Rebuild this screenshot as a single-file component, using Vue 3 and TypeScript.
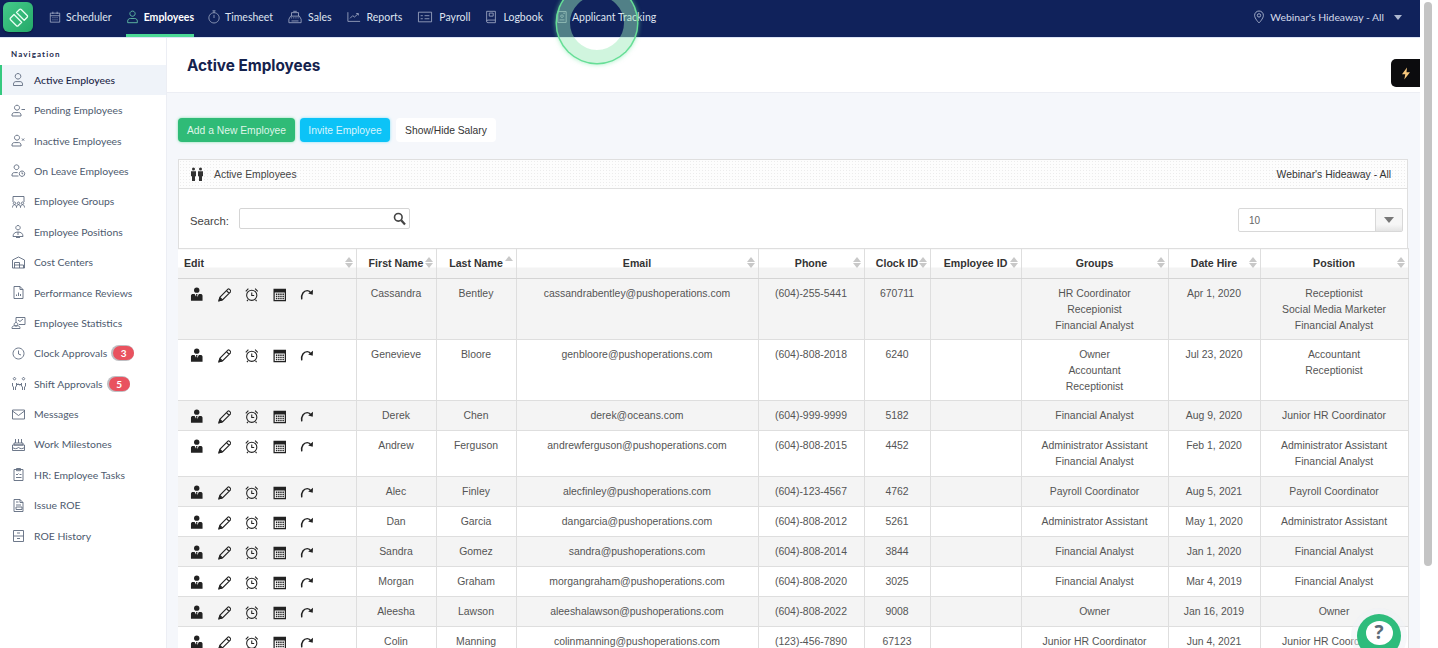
<script setup lang="ts">
const topIcons: Record<string, { d: string; w: number; vb: string }> = {
  scheduler: { w: 12, vb: '0 0 14 16', d: 'M1.500 3.500h11v10.500h-11zM1.500 6.500h11M4.500 1.800v2.700M9.500 1.800v2.700M4 8.800h1.200M6.400 8.800h1.200M8.800 8.800h1.200M4 11.300h1.200M6.400 11.300h1.200M8.800 11.300h1.200' },
  employees: { w: 13, vb: '0 0 14 16', d: 'M7 1.200a3 3 0 1 0 .01 0zM1.500 14.500v-1.800c0-1.800 1.300-3 3-3h5c1.700 0 3 1.200 3 3v1.800z' },
  timesheet: { w: 12, vb: '0 0 14 16', d: 'M7 3a6 6 0 1 0 .01 0zM7 .8V3M5.200.8h3.600M7 5.500v3.700' },
  sales: { w: 16, vb: '0 0 16 16', d: 'M3 7h10l2 3.500V14.500H1v-4zM4 7V3h8v4M6 1.500h4M3.500 9h1.200M6 9h1.200M8.500 9h1.200M11 9h1.200M4 12.500h8' },
  reports: { w: 16, vb: '0 0 16 16', d: 'M1 2.500v10.500h14M3.500 9.500l3-3 2 1.500 4-3.500M10.500 4h2.500v2.200' },
  payroll: { w: 18, vb: '0 0 17 16', d: 'M1 2.500h15v11H1zM3.500 6.500h2.500M3.500 10h2.500M8 6.500h5.500M8 10h5.500' },
  logbook: { w: 14, vb: '0 0 13 16', d: 'M1.500 1.500h10v13h-8.500A1.500 1.500 0 0 1 1.500 13zM1.500 13A1.500 1.500 0 0 1 3 11.500h8.500M4.500 3.500h4.500v3.500H4.500z' },
  applicant: { w: 10, vb: '0 0 12 16', d: 'M1 1.500h10v13H1zM6 5.500a1.500 1.500 0 1 0 .01 0zM3 11.500h6M7.500 3.500h2' },
};
const topItems = [
  { key: 'scheduler', label: 'Scheduler' },
  { key: 'employees', label: 'Employees', active: true },
  { key: 'timesheet', label: 'Timesheet' },
  { key: 'sales', label: 'Sales' },
  { key: 'reports', label: 'Reports' },
  { key: 'payroll', label: 'Payroll' },
  { key: 'logbook', label: 'Logbook' },
  { key: 'applicant', label: 'Applicant Tracking' },
];
const sideItems: { label: string; d: string; active?: boolean; badge?: string }[] = [
  { label: 'Active Employees', active: true, d: 'M7 1.500a2.800 2.800 0 1 0 .01 0zM2.500 13.500v-1.400c0-1.500 1-2.500 2.300-2.500h4.400c1.300 0 2.300 1 2.300 2.500v1.400z' },
  { label: 'Pending Employees', d: 'M6 2.200a2.500 2.500 0 1 0 .01 0zM1 13v-1c0-1.500 1-2.400 2.300-2.400h4.400c1.300 0 2.300.9 2.300 2.400v1zM10.500 6.500H14' },
  { label: 'Inactive Employees', d: 'M6 2.200a2.500 2.500 0 1 0 .01 0zM1 13v-1c0-1.500 1-2.400 2.300-2.400h4.400c1.300 0 2.300.9 2.300 2.400v1zM11 5.500l2.200 2.200M13.200 5.500L11 7.700' },
  { label: 'On Leave Employees', d: 'M5.500 1.800a2.400 2.400 0 1 0 .01 0zM1 13v-1c0-1.500 1-2.400 2.300-2.400h3.400M11 8a2.700 2.700 0 1 0 .01 0zM11 9.300v1.500h1.200M1 13h6.500' },
  { label: 'Employee Groups', d: 'M2 8V2.500h11V8M3.500 8a1.200 1.200 0 1 0 .01 0zM7.500 8a1.200 1.200 0 1 0 .01 0zM11.500 8a1.200 1.200 0 1 0 .01 0zM1.500 13.500c0-2 1-2.800 2-2.800s2 .8 2 2.800M5.500 13.500c0-2 1-2.800 2-2.800s2 .8 2 2.800M9.500 13.500c0-2 1-2.800 2-2.800s2 .8 2 2.800' },
  { label: 'Employee Positions', d: 'M7 1.500a2.200 2.200 0 1 0 .01 0zM2 12.500c0-3 2-4.500 5-4.500s5 1.500 5 4.500zM7 8v3M5 13.500h4' },
  { label: 'Cost Centers', d: 'M1.500 13V5L7.500 2l6 3v8zM3.500 13V7.500h5V13M8.500 10h4v3M3.500 10h5' },
  { label: 'Performance Reviews', d: 'M3 1.500h6l3 3v9H3zM9 1.500v3h3M5.500 11V9.500M7.500 11V7.500M9.500 11V9' },
  { label: 'Employee Statistics', d: 'M5 7V2.500h9v7H8M7 5l2 1.500L12 4M5 7.500a1.800 1.800 0 1 0 .01 0zM1 13.500v-.7c0-1 1-2 2.200-2h3.600c1.200 0 2.200 1 2.200 2v.7z' },
  { label: 'Clock Approvals', badge: '3', d: 'M7.500 2a5.500 5.500 0 1 0 .01 0zM7.500 4.500v3.500l2.500 1' },
  { label: 'Shift Approvals', badge: '5', d: 'M3.500 1.500a1.200 1.200 0 1 0 .01 0zM12.500 1.500a1.200 1.200 0 1 0 .01 0zM1.500 7v3l1 1v3M5.500 7v3l-1 1v3M10.500 7v3l1 1v3M14.500 7v3l-1 1v3M6 8.500h4M6.200 8.500l1.200-1M9.800 8.500l-1.200 1' },
  { label: 'Messages', d: 'M1.500 3h12v9h-12zM1.500 4l6 4.500 6-4.500' },
  { label: 'Work Milestones', d: 'M1.500 8h12v5.500h-12zM1.500 10.500c2 1.500 4 1.500 6 0 2 1.500 4 1.500 6 0M3 6h9v2H3zM4.500 2v4M7.500 2v4M10.500 2v4' },
  { label: 'HR: Employee Tasks', d: 'M3 2.500h9v11H3zM5.500 1.500h4v2.200h-4zM5 7l1 1 1.500-1.500M8.500 7.500H10.500M5 10.500h5.500' },
  { label: 'Issue ROE', d: 'M3 1.500h6l3 3v9H3zM9 1.500v3h3M5 4h2.500M5 7h5M5 9h6v2.500H5z' },
  { label: 'ROE History', d: 'M2.500 2.500h10v11h-10zM2.500 8h10M6 5h3M6 10.500h3' },
];
const columns = [
  { label: 'Edit', cls: 'c-edit' },
  { label: 'First Name', cls: 'c-first' },
  { label: 'Last Name', cls: 'c-last', sorted: true },
  { label: 'Email', cls: 'c-email' },
  { label: 'Phone', cls: 'c-phone' },
  { label: 'Clock ID', cls: 'c-clock' },
  { label: 'Employee ID', cls: 'c-emp' },
  { label: 'Groups', cls: 'c-groups' },
  { label: 'Date Hire', cls: 'c-date' },
  { label: 'Position', cls: 'c-pos' },
];
const rows = [
  { first: 'Cassandra', last: 'Bentley', email: 'cassandrabentley@pushoperations.com', phone: '(604)-255-5441', clock: '670711', groups: ['HR Coordinator', 'Recepionist', 'Financial Analyst'], date: 'Apr 1, 2020', pos: ['Receptionist', 'Social Media Marketer', 'Financial Analyst'] },
  { first: 'Genevieve', last: 'Bloore', email: 'genbloore@pushoperations.com', phone: '(604)-808-2018', clock: '6240', groups: ['Owner', 'Accountant', 'Receptionist'], date: 'Jul 23, 2020', pos: ['Accountant', 'Receptionist'] },
  { first: 'Derek', last: 'Chen', email: 'derek@oceans.com', phone: '(604)-999-9999', clock: '5182', groups: ['Financial Analyst'], date: 'Aug 9, 2020', pos: ['Junior HR Coordinator'] },
  { first: 'Andrew', last: 'Ferguson', email: 'andrewferguson@pushoperations.com', phone: '(604)-808-2015', clock: '4452', groups: ['Administrator Assistant', 'Financial Analyst'], date: 'Feb 1, 2020', pos: ['Administrator Assistant', 'Financial Analyst'] },
  { first: 'Alec', last: 'Finley', email: 'alecfinley@pushoperations.com', phone: '(604)-123-4567', clock: '4762', groups: ['Payroll Coordinator'], date: 'Aug 5, 2021', pos: ['Payroll Coordinator'] },
  { first: 'Dan', last: 'Garcia', email: 'dangarcia@pushoperations.com', phone: '(604)-808-2012', clock: '5261', groups: ['Administrator Assistant'], date: 'May 1, 2020', pos: ['Administrator Assistant'] },
  { first: 'Sandra', last: 'Gomez', email: 'sandra@pushoperations.com', phone: '(604)-808-2014', clock: '3844', groups: ['Financial Analyst'], date: 'Jan 1, 2020', pos: ['Financial Analyst'] },
  { first: 'Morgan', last: 'Graham', email: 'morgangraham@pushoperations.com', phone: '(604)-808-2020', clock: '3025', groups: ['Financial Analyst'], date: 'Mar 4, 2019', pos: ['Financial Analyst'] },
  { first: 'Aleesha', last: 'Lawson', email: 'aleeshalawson@pushoperations.com', phone: '(604)-808-2022', clock: '9008', groups: ['Owner'], date: 'Jan 16, 2019', pos: ['Owner'] },
  { first: 'Colin', last: 'Manning', email: 'colinmanning@pushoperations.com', phone: '(123)-456-7890', clock: '67123', groups: ['Junior HR Coordinator'], date: 'Jun 4, 2021', pos: ['Junior HR Coordinator'] },
];
</script>

<template>
  <div class="page">
    <div class="app">
      <header class="topbar">
        <div class="logo">
          <svg width="30" height="30" viewBox="0 0 30 30" fill="none" stroke="#eafff3" stroke-width="1.300" stroke-linejoin="round">
            <path d="M17.500 7.500a1.200 1.200 0 0 1 1.700 0l6 6a1.200 1.200 0 0 1 0 1.700l-3 3L14.500 10.500z" transform="translate(-1 0)" />
            <path d="M14.500 10.500l7.700 7.700-3.500 3.500a1.200 1.200 0 0 1-1.700 0l-6-6a1.200 1.200 0 0 1 0-1.700z" transform="translate(-3.500 2)" />
          </svg>
        </div>
        <nav class="topnav">
          <a v-for="t in topItems" :key="t.key" class="topitem" :class="{ on: t.active }">
            <svg class="ticon" :width="topIcons[t.key].w" height="14" :viewBox="topIcons[t.key].vb" fill="none" stroke-width="0.9"><path :d="topIcons[t.key].d" /></svg>
            <span>{{ t.label }}</span>
          </a>
        </nav>
        <div class="location">
          <svg width="12" height="14" viewBox="0 0 12 14" fill="none" stroke="#aeb8d0" stroke-width="0.9"><path d="M6 1a4.400 4.400 0 0 0-4.400 4.400C1.600 8.500 6 13 6 13s4.400-4.500 4.400-7.600A4.400 4.400 0 0 0 6 1z" /><circle cx="6" cy="5.400" r="1.700" /></svg>
          <span>Webinar's Hideaway - All</span>
          <i class="caret"></i>
        </div>
      </header>

      <div class="body">
        <aside class="sidebar">
          <div class="navhead">Navigation</div>
          <a v-for="s in sideItems" :key="s.label" class="sideitem" :class="{ on: s.active }">
            <svg class="sicon" viewBox="0 0 15 15" fill="none" stroke="#5d6a7e" stroke-width="0.9"><path :d="s.d" /></svg>
            <span>{{ s.label }}</span>
            <b v-if="s.badge" class="badge">{{ s.badge }}</b>
          </a>
        </aside>

        <main class="main">
          <div class="titlebar"><h1>Active Employees</h1></div>
          <div class="content">
            <div class="buttons">
              <button class="btn green">Add a New Employee</button>
              <button class="btn cyan">Invite Employee</button>
              <button class="btn plain">Show/Hide Salary</button>
            </div>
            <section class="panel">
              <div class="panelhead">
                <svg width="14" height="14" viewBox="0 0 14 14" fill="#333"><circle cx="3.500" cy="2" r="1.500" /><circle cx="10.500" cy="2" r="1.500" /><path d="M1 4.200h5v5H5v4.800H2V9.200H1zM8 4.200h5v5h-1v4.800H9V9.200H8z" /></svg>
                <span class="ptitle">Active Employees</span>
                <span class="pright">Webinar's Hideaway - All</span>
              </div>
              <div class="controls">
                <label class="search">
                  <span>Search:</span>
                  <span class="searchbox">
                    <svg width="13" height="14" viewBox="0 0 13 14" fill="none" stroke="#444"><circle cx="5.300" cy="5.300" r="3.800" stroke-width="1.600" /><path d="M8.200 8.200l3.800 4.300" stroke-width="2.200" /></svg>
                  </span>
                </label>
                <div class="select">
                  <span class="selval">10</span>
                  <span class="selbtn"><i></i></span>
                </div>
              </div>
              <table class="grid">
                <thead>
                  <tr>
                    <th v-for="c in columns" :key="c.label" :class="c.cls">
                      {{ c.label }}
                      <span class="sort" :class="{ sorted: c.sorted }"><i class="up"></i><i class="down"></i></span>
                    </th>
                  </tr>
                </thead>
                <tbody>
                  <tr v-for="r in rows" :key="r.email" :class="{ tall: r.groups.length === 3 }">
                    <td class="edit">
                      <div class="actions">
                        <svg viewBox="0 0 14 15" fill="#222"><circle cx="7" cy="3" r="2.800" /><path d="M1 14V8.800C1 7.600 2 7 3 7h1.800L7 11 9.200 7H11c1 0 2 .6 2 1.800V14z" /><path d="M6.200 7h1.600L7.500 8.200 8 11 7 12.500 6 11l.5-2.800z" /></svg>
                        <svg viewBox="0 0 14 15" fill="none" stroke="#222" stroke-width="1.150"><path d="M1 14l.9-3.600L10.300 2a1 1 0 0 1 1.400 0l1.300 1.300a1 1 0 0 1 0 1.400L4.600 13.100zM1.900 10.400l2.700 2.700M8.800 3.500l2.700 2.700" /><path d="M1 14l.6-2.300 1.700 1.700z" fill="#222" /></svg>
                        <svg viewBox="0 0 14 15" fill="none" stroke="#222" stroke-width="1.100"><circle cx="7" cy="8.300" r="5.300" /><path d="M7 5.300v3.200h2.500M.8 4.200L3.500 1.500M13.200 4.200L10.500 1.500M3 13l-1 1.300M11 13l1 1.300" /></svg>
                        <svg viewBox="0 0 14 15" fill="#222"><path d="M.5 1.500h13V14.500H.5zM1.800 5.500v7.800h10.400V5.500z" /><path d="M3 6.500h1.500v1.500H3zM5.300 6.500h1.500v1.500H5.300zM7.500 6.500H9v1.500H7.500zM9.800 6.500h1.500v1.500H9.800zM3 8.800h1.500v1.500H3zM5.300 8.800h1.500v1.500H5.300zM7.500 8.800H9v1.500H7.500zM9.800 8.800h1.500v1.500H9.800zM3 11h1.500v1.500H3zM5.300 11h1.500v1.500H5.300zM7.500 11H9v1.500H7.500zM9.800 11h1.500v1.500H9.800z" /></svg>
                        <svg viewBox="0 0 14 15" fill="none" stroke="#222" stroke-width="1.500"><path d="M1.800 12.500C1 7 4 3.500 7.500 3.500c1.700 0 3 .8 3.700 2.200" /><path d="M13.500 2.500l-.3 5.200-4.700-1.200z" fill="#222" stroke="none" /></svg>
                      </div>
                    </td>
                    <td>{{ r.first }}</td>
                    <td>{{ r.last }}</td>
                    <td>{{ r.email }}</td>
                    <td>{{ r.phone }}</td>
                    <td>{{ r.clock }}</td>
                    <td></td>
                    <td><div v-for="g in r.groups" :key="g">{{ g }}</div></td>
                    <td>{{ r.date }}</td>
                    <td><div v-for="p in r.pos" :key="p">{{ p }}</div></td>
                  </tr>
                </tbody>
              </table>
            </section>
          </div>
        </main>
      </div>
    </div>

    <div class="scrollbar"><div class="thumb"></div></div>

    <div class="ring"></div>
    <div class="bolt">
      <svg width="10" height="13" viewBox="0 0 10 13"><path d="M6 .5L1 7.300h3.300L3.300 12.500 9 5.300H5.500z" fill="#f7c77c" /></svg>
    </div>
    <div class="help">
      <div class="bubble">?</div>
    </div>
  </div>
</template>

<style>
html, body { margin: 0; padding: 0; overflow: hidden; background: #fff; }
</style>

<style scoped>
.page { position: relative; display: flex; width: 1438px; height: 648px; overflow: hidden; background: #fff; font-family: "Liberation Sans", Arial, sans-serif; }
.app { width: 1420px; flex: none; display: flex; flex-direction: column; overflow: hidden; }
.scrollbar { flex: 1; padding: 2px 6px 0 4px; background: #fff; }
.thumb { height: 564px; border-radius: 4px; background: #c4c4c4; }

.topbar { flex: none; height: 37px; display: flex; align-items: flex-start; background: #10225b; box-shadow: 0 1px 0 #dde4f6; position: relative; z-index: 1; }
.logo { width: 30px; height: 30px; margin: 2px 0 0 3px; border-radius: 6px; background: linear-gradient(135deg, #45c98a, #23a968); box-shadow: 0 1px 2px rgba(0,0,0,.4); }
.logo svg { display: block; }
.topnav { display: flex; height: 37px; margin-left: 16px; gap: 14px; }
.topitem { display: flex; align-items: center; gap: 5px; height: 37px; box-sizing: border-box; border-bottom: 3px solid transparent; color: #dfe4f0; font: 400 10.500px "Lato", sans-serif; stroke: #a9b3cb; }
.topitem.on { color: #fff; font-weight: 700; border-bottom-color: #4bd895; stroke: #6fd8b0; }
.ticon { flex: none; }
.location { height: 34px; margin-left: auto; margin-right: 18px; display: flex; align-items: center; gap: 5px; color: #d6dcec; font: 400 10.400px "Lato", sans-serif; }
.caret { margin-left: 5px; width: 0; height: 0; border: 4px solid transparent; border-top: 5px solid #aeb8d0; border-bottom: 0; }

.body { flex: 1; display: flex; min-height: 0; }
.sidebar { flex: none; width: 166px; background: #fff; border-right: 1px solid #eceef4; padding-top: 12px; }
.navhead { height: 15.600px; padding-left: 11px; color: #1e2b4d; font: 700 8px/10px "Lato", sans-serif; letter-spacing: 1.100px; }
.sideitem { position: relative; display: flex; align-items: center; height: 30.400px; padding-left: 11px; color: #4d5a6e; font: 400 10.400px "Lato", sans-serif; }
.sideitem.on { background: #eff3f9; color: #1c2748; font-weight: 500; box-shadow: inset 2px 0 0 #35c97f; }
.sicon { width: 15px; height: 15px; flex: none; margin-right: 8px; }
.badge { margin-left: 6px; min-width: 21px; height: 14px; padding: 0 1px; box-sizing: border-box; border-radius: 7px; background: #e9525f; color: #fff; font: 700 10px/14px "Lato", sans-serif; text-align: center; box-shadow: -1px 0 0 1px rgba(70,70,80,.35); }

.main { flex: 1; min-width: 0; display: flex; flex-direction: column; background: #f5f7fb; }
.titlebar { flex: none; height: 56px; box-sizing: border-box; background: #fff; border-bottom: 1px solid #eceef4; padding: 20px 0 0 20px; }
h1 { margin: 0; color: #15224d; font: 700 15.300px/18px "Inter", sans-serif; }
.content { padding: 25px 12px 0 11px; }
.buttons { display: flex; gap: 5px; height: 24px; }
.btn { height: 24px; padding: 0; border: 0; border-radius: 4px; font: 400 10.300px "Liberation Sans", sans-serif; }
.green { width: 117px; background: #2fbb77; color: #dff5e8; box-shadow: 0 0 3px #7fe0ac; }
.cyan { width: 90px; background: #0cc3f7; color: #d8f4fd; box-shadow: 0 0 3px #7fdff9; }
.plain { width: 100px; margin-left: 1px; background: #fff; color: #333; }

.panel { margin-top: 17px; background: #fff; border: 1px solid #dfdfdf; border-bottom: 0; width: 1228px; }
.panelhead { height: 28px; display: flex; align-items: center; padding: 0 16px 0 11px; border-bottom: 1px solid #dfdfdf; color: #444; font-size: 10.400px; background-color: #fdfdfd; background-image: radial-gradient(#ececec 0.7px, transparent 0.8px); background-size: 3px 3px; }
.ptitle { margin-left: 10px; }
.pright { margin-left: auto; color: #333; }
.controls { height: 59px; display: flex; justify-content: space-between; padding: 19px 4px 0 11px; box-sizing: border-box; }
.search { display: flex; gap: 10px; height: 21px; color: #444; font-size: 11.300px; align-items: flex-start; }
.search > span:first-child { line-height: 27px; }
.searchbox { width: 171px; height: 21px; box-sizing: border-box; border: 1px solid #d5d5d5; border-radius: 2px; background: #fff; display: flex; align-items: center; justify-content: flex-end; padding-right: 3px; }
.select { display: flex; width: 165px; height: 24px; box-sizing: border-box; border: 1px solid #d8d8d8; border-radius: 2px; color: #666; font-size: 10px; }
.selval { flex: 1; line-height: 24px; padding-left: 10px; }
.selbtn { width: 26px; background: linear-gradient(#f6f6f6 70%, #e4e4e4); border-left: 1px solid #d8d8d8; display: flex; align-items: center; justify-content: center; }
.selbtn i { width: 0; height: 0; border: 5px solid transparent; border-top: 6px solid #777; border-bottom: 0; }

.grid { width: 1230px; margin-left: -1px; table-layout: fixed; border-collapse: collapse; font-size: 10.450px; color: #555; }
th { position: relative; height: 30px; padding: 0 0 1px; color: #333; font-weight: 700; font-size: 10.600px; text-align: center; border: 1px solid #dedede; border-bottom: 1px solid #d4d4d4; background: linear-gradient(#fff 0 18px, #f3f3f3 18px); box-sizing: border-box; }
th.c-edit { text-align: left; padding-left: 6px; border-left: 0; }
.c-edit { width: 178px; } .c-first { width: 80px; } .c-last { width: 80px; } .c-email { width: 242px; } .c-phone { width: 106px; }
.c-clock { width: 66px; } .c-emp { width: 91px; } .c-groups { width: 147px; } .c-date { width: 92px; } .c-pos { width: 148px; }
.sort { position: absolute; right: 3px; top: 8px; display: flex; flex-direction: column; gap: 1px; }
.sort i { width: 0; height: 0; border: 4px solid transparent; }
.sort .up { border-bottom: 5px solid #c8c8c8; border-top: 0; }
.sort .down { border-top: 5px solid #c8c8c8; border-bottom: 0; }
.sort.sorted { top: 7px; }
.sort.sorted .down { visibility: hidden; }
td { padding: 7px 4px 6px; line-height: 16px; text-align: center; vertical-align: top; border: 1px solid #dedede; border-top: 0; box-sizing: border-box; }
.tall td { padding-bottom: 5px; }
td.edit { padding-left: 12px; padding-right: 0; border-left: 0; }
tbody tr:nth-child(odd) td { background: #f4f4f4; }
tbody tr:nth-child(even) td { background: #fff; }
.actions { display: flex; gap: 14px; height: 16px; align-items: center; }
.actions svg { width: 13.500px; height: 15px; flex: none; }

.ring { position: absolute; left: 557px; top: -17px; width: 80px; height: 80px; box-sizing: border-box; border-radius: 50%; border: 13px solid rgba(155,234,185,.47); box-shadow: 0 0 0 1.500px #66de96, 0 0 4px 2px rgba(110,230,160,.5); background-clip: padding-box; z-index: 3; }
.bolt { position: absolute; left: 1391px; top: 59px; width: 29px; height: 28px; background: #0c0c0e; border-radius: 5px 0 0 5px; display: flex; align-items: center; justify-content: center; z-index: 2; }
.help { position: absolute; left: 1357px; top: 614px; width: 44px; height: 44px; border-radius: 50%; background: #2ebc7c; box-shadow: 0 0 0 6px rgba(240,242,246,.5); display: flex; justify-content: center; padding-top: 7px; box-sizing: border-box; z-index: 2; }
.bubble { width: 27px; height: 24px; border-radius: 50%; background: #fff; color: #5b6b78; font: 700 19px/23px "Open Sans", sans-serif; text-align: center; }
</style>
